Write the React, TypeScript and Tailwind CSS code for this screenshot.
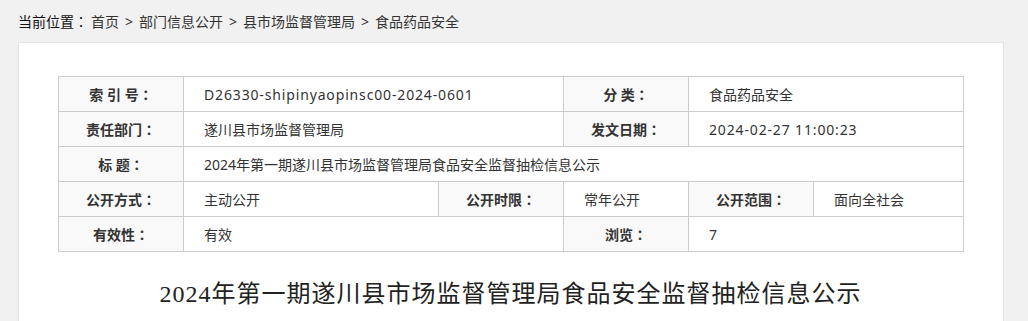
import React from 'react';

const font = { fontFamily: '"Noto Sans", "Noto Sans CJK SC", sans-serif' };

const labelClass = "border border-[#cccccc] bg-[#f9f9f9] text-center font-bold text-[#333] h-[35px] p-0";
const valueClass = "border border-[#cccccc] bg-white text-left text-[#333] h-[35px] py-0 pl-[20px]";

const crumbs = ['首页', '部门信息公开', '县市场监督管理局', '食品药品安全'];

// full-width colon, centred in its box like the reference
const Colon = () => (
    <span style={{ fontFamily: '"Noto Sans CJK TC", sans-serif' }}>：</span>
);

const Label = ({ text }: { text: string }) => (
    <>
        {text}
        <Colon />
    </>
);

// latin runs are a touch wider in the original font
const Latin = ({ children }: { children: React.ReactNode }) => (
    <span className="tracking-[0.85px]">{children}</span>
);

export default function App() {
    return (
        <div className="min-h-[321px] w-[1028px] bg-[#f1f1f1] overflow-hidden" style={font}>
            {/* Breadcrumb */}
            <div className="h-[42px] pl-[18px] flex items-center text-[14px] text-[#333]">
                <span className="text-[#111]">
                    当前位置<Colon />
                </span>
                <span className="ml-[3px]">
                    {crumbs.map((c, i) => (
                        <span key={c}>
                            {i > 0 && <span className="mx-[6px]">&gt;</span>}
                            {c}
                        </span>
                    ))}
                </span>
            </div>

            {/* Panel */}
            <div className="ml-[18px] w-[986px] bg-white border border-[#e3e3e3] border-b-0 pt-[33px] pl-[39px] pb-[40px]">
                <table className="table-fixed border-collapse w-[905px] text-[14px]">
                    <colgroup>
                        <col className="w-[125px]" />
                        <col className="w-[255px]" />
                        <col className="w-[125px]" />
                        <col className="w-[125px]" />
                        <col className="w-[125px]" />
                        <col className="w-[150px]" />
                    </colgroup>
                    <tbody>
                        <tr>
                            <td className={labelClass}><Label text="索 引 号" /></td>
                            <td className={valueClass} colSpan={2}><Latin>D26330-shipinyaopinsc00-2024-0601</Latin></td>
                            <td className={labelClass}><Label text="分 类" /></td>
                            <td className={valueClass} colSpan={2}>食品药品安全</td>
                        </tr>
                        <tr>
                            <td className={labelClass}><Label text="责任部门" /></td>
                            <td className={valueClass} colSpan={2}>遂川县市场监督管理局</td>
                            <td className={labelClass}><Label text="发文日期" /></td>
                            <td className={valueClass} colSpan={2}><Latin>2024-02-27 11:00:23</Latin></td>
                        </tr>
                        <tr>
                            <td className={labelClass}><Label text="标 题" /></td>
                            <td className={valueClass} colSpan={5}>2024年第一期遂川县市场监督管理局食品安全监督抽检信息公示</td>
                        </tr>
                        <tr>
                            <td className={labelClass}><Label text="公开方式" /></td>
                            <td className={valueClass}>主动公开</td>
                            <td className={labelClass}><Label text="公开时限" /></td>
                            <td className={valueClass}>常年公开</td>
                            <td className={labelClass}><Label text="公开范围" /></td>
                            <td className={valueClass}>面向全社会</td>
                        </tr>
                        <tr>
                            <td className={labelClass}><Label text="有效性" /></td>
                            <td className={valueClass} colSpan={2}>有效</td>
                            <td className={labelClass}><Label text="浏览" /></td>
                            <td className={valueClass} colSpan={2}><Latin>7</Latin></td>
                        </tr>
                    </tbody>
                </table>

                <h1
                    className="w-[905px] mt-[24px] text-center text-[24px] leading-[36px] tracking-[1px] text-[#222]"
                    style={{ fontFamily: '"Liberation Serif", "Noto Sans CJK SC", serif' }}
                >
                    2024年第一期遂川县市场监督管理局食品安全监督抽检信息公示
                </h1>
            </div>
        </div>
    );
}
